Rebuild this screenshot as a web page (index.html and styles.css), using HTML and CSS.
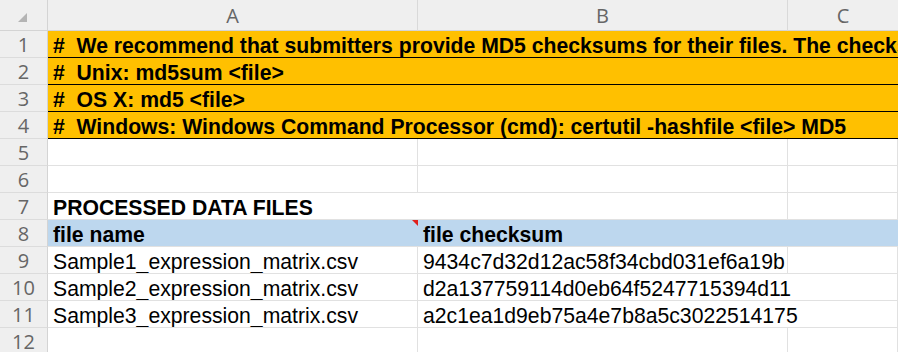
FILE: index.html
```html
<!DOCTYPE html>
<html lang="en">
<head>
    <meta charset="UTF-8">
    <title>Checksums</title>
    <link rel="stylesheet" href="styles.css">
</head>
<body>
    <div class="sheet">
        <!-- column headers -->
        <div class="corner"><span class="select-all"></span></div>
        <div class="col-head">A</div>
        <div class="col-head">B</div>
        <div class="col-head last">C</div>

        <div class="row-head">1</div>
        <div class="cell note span-3">#  We recommend that submitters provide MD5 checksums for their files. The checksums will be used to verify file integrity.</div>

        <div class="row-head">2</div>
        <div class="cell note span-3">#  Unix: md5sum &lt;file&gt;</div>

        <div class="row-head">3</div>
        <div class="cell note span-3">#  OS X: md5 &lt;file&gt;</div>

        <div class="row-head">4</div>
        <div class="cell note span-3">#  Windows: Windows Command Processor (cmd): certutil -hashfile &lt;file&gt; MD5</div>

        <div class="row-head">5</div>
        <div class="cell"></div>
        <div class="cell"></div>
        <div class="cell"></div>

        <div class="row-head">6</div>
        <div class="cell"></div>
        <div class="cell"></div>
        <div class="cell"></div>

        <div class="row-head">7</div>
        <div class="cell bold span-2">PROCESSED DATA FILES</div>
        <div class="cell"></div>

        <div class="row-head">8</div>
        <div class="cell head has-comment">file name</div>
        <div class="cell head">file checksum</div>
        <div class="cell head"></div>

        <div class="row-head">9</div>
        <div class="cell">Sample1_expression_matrix.csv</div>
        <div class="cell spill">9434c7d32d12ac58f34cbd031ef6a19b</div>
        <div class="cell"></div>

        <div class="row-head">10</div>
        <div class="cell">Sample2_expression_matrix.csv</div>
        <div class="cell span-2">d2a137759114d0eb64f5247715394d11</div>

        <div class="row-head">11</div>
        <div class="cell">Sample3_expression_matrix.csv</div>
        <div class="cell span-2">a2c1ea1d9eb75a4e7b8a5c3022514175</div>

        <div class="row-head">12</div>
        <div class="cell"></div>
        <div class="cell"></div>
        <div class="cell"></div>
    </div>
</body>
</html>
```

FILE: styles.css
```css
* {
    margin: 0;
    padding: 0;
    box-sizing: border-box;
}

body {
    background: #ffffff;
    width: 898px;
    height: 352px;
    overflow: hidden;
}

.sheet {
    display: grid;
    grid-template-columns: 48px 370px 370px 1fr;
    grid-template-rows: 31px;
    grid-auto-rows: 27px;
    font-family: 'Liberation Sans', Arial, sans-serif;
    font-size: 21.2px;
    color: #000;
}

.corner,
.col-head,
.row-head {
    background-color: #efefef;
    color: #666;
    font-family: 'Open Sans', 'Noto Sans', sans-serif;
    font-size: 20px;
}

.corner {
    position: relative;
    border-right: 1px solid #d4d4d4;
    border-bottom: 1px solid #d4d4d4;
}

.select-all {
    position: absolute;
    left: 18px;
    top: 13px;
    width: 0;
    height: 0;
    border-left: 9px solid transparent;
    border-bottom: 9px solid #b4b4b4;
}

.col-head {
    display: flex;
    align-items: center;
    justify-content: center;
    border-right: 1px solid #d9d9d9;
    border-bottom: 1px solid #d4d4d4;
}

.col-head.last {
    border-right: none;
}

.row-head {
    display: flex;
    align-items: center;
    justify-content: center;
    border-right: 1px solid #d4d4d4;
    border-bottom: 1px solid #dcdcdc;
    line-height: 1;
    padding-top: 1px;
}

.cell {
    position: relative;
    padding: 3px 5px 0;
    line-height: 24px;
    white-space: pre;
    overflow: hidden;
    border-right: 1px solid #e1e1e1;
    border-bottom: 1px solid #e1e1e1;
}

.spill {
    overflow: visible;
}

.span-2 {
    grid-column: span 2;
}

.span-3 {
    grid-column: span 3;
}

.note {
    background-color: #ffc000;
    font-weight: bold;
    border-right: none;
    border-bottom: 1px solid #000;
}

.bold {
    font-weight: bold;
}

.head {
    background-color: #bdd7ee;
    font-weight: bold;
    border-right: none;
}

.has-comment::after {
    content: '';
    position: absolute;
    top: 0;
    right: 0;
    width: 0;
    height: 0;
    border-left: 6px solid transparent;
    border-top: 6px solid #e0201c;
}
```
